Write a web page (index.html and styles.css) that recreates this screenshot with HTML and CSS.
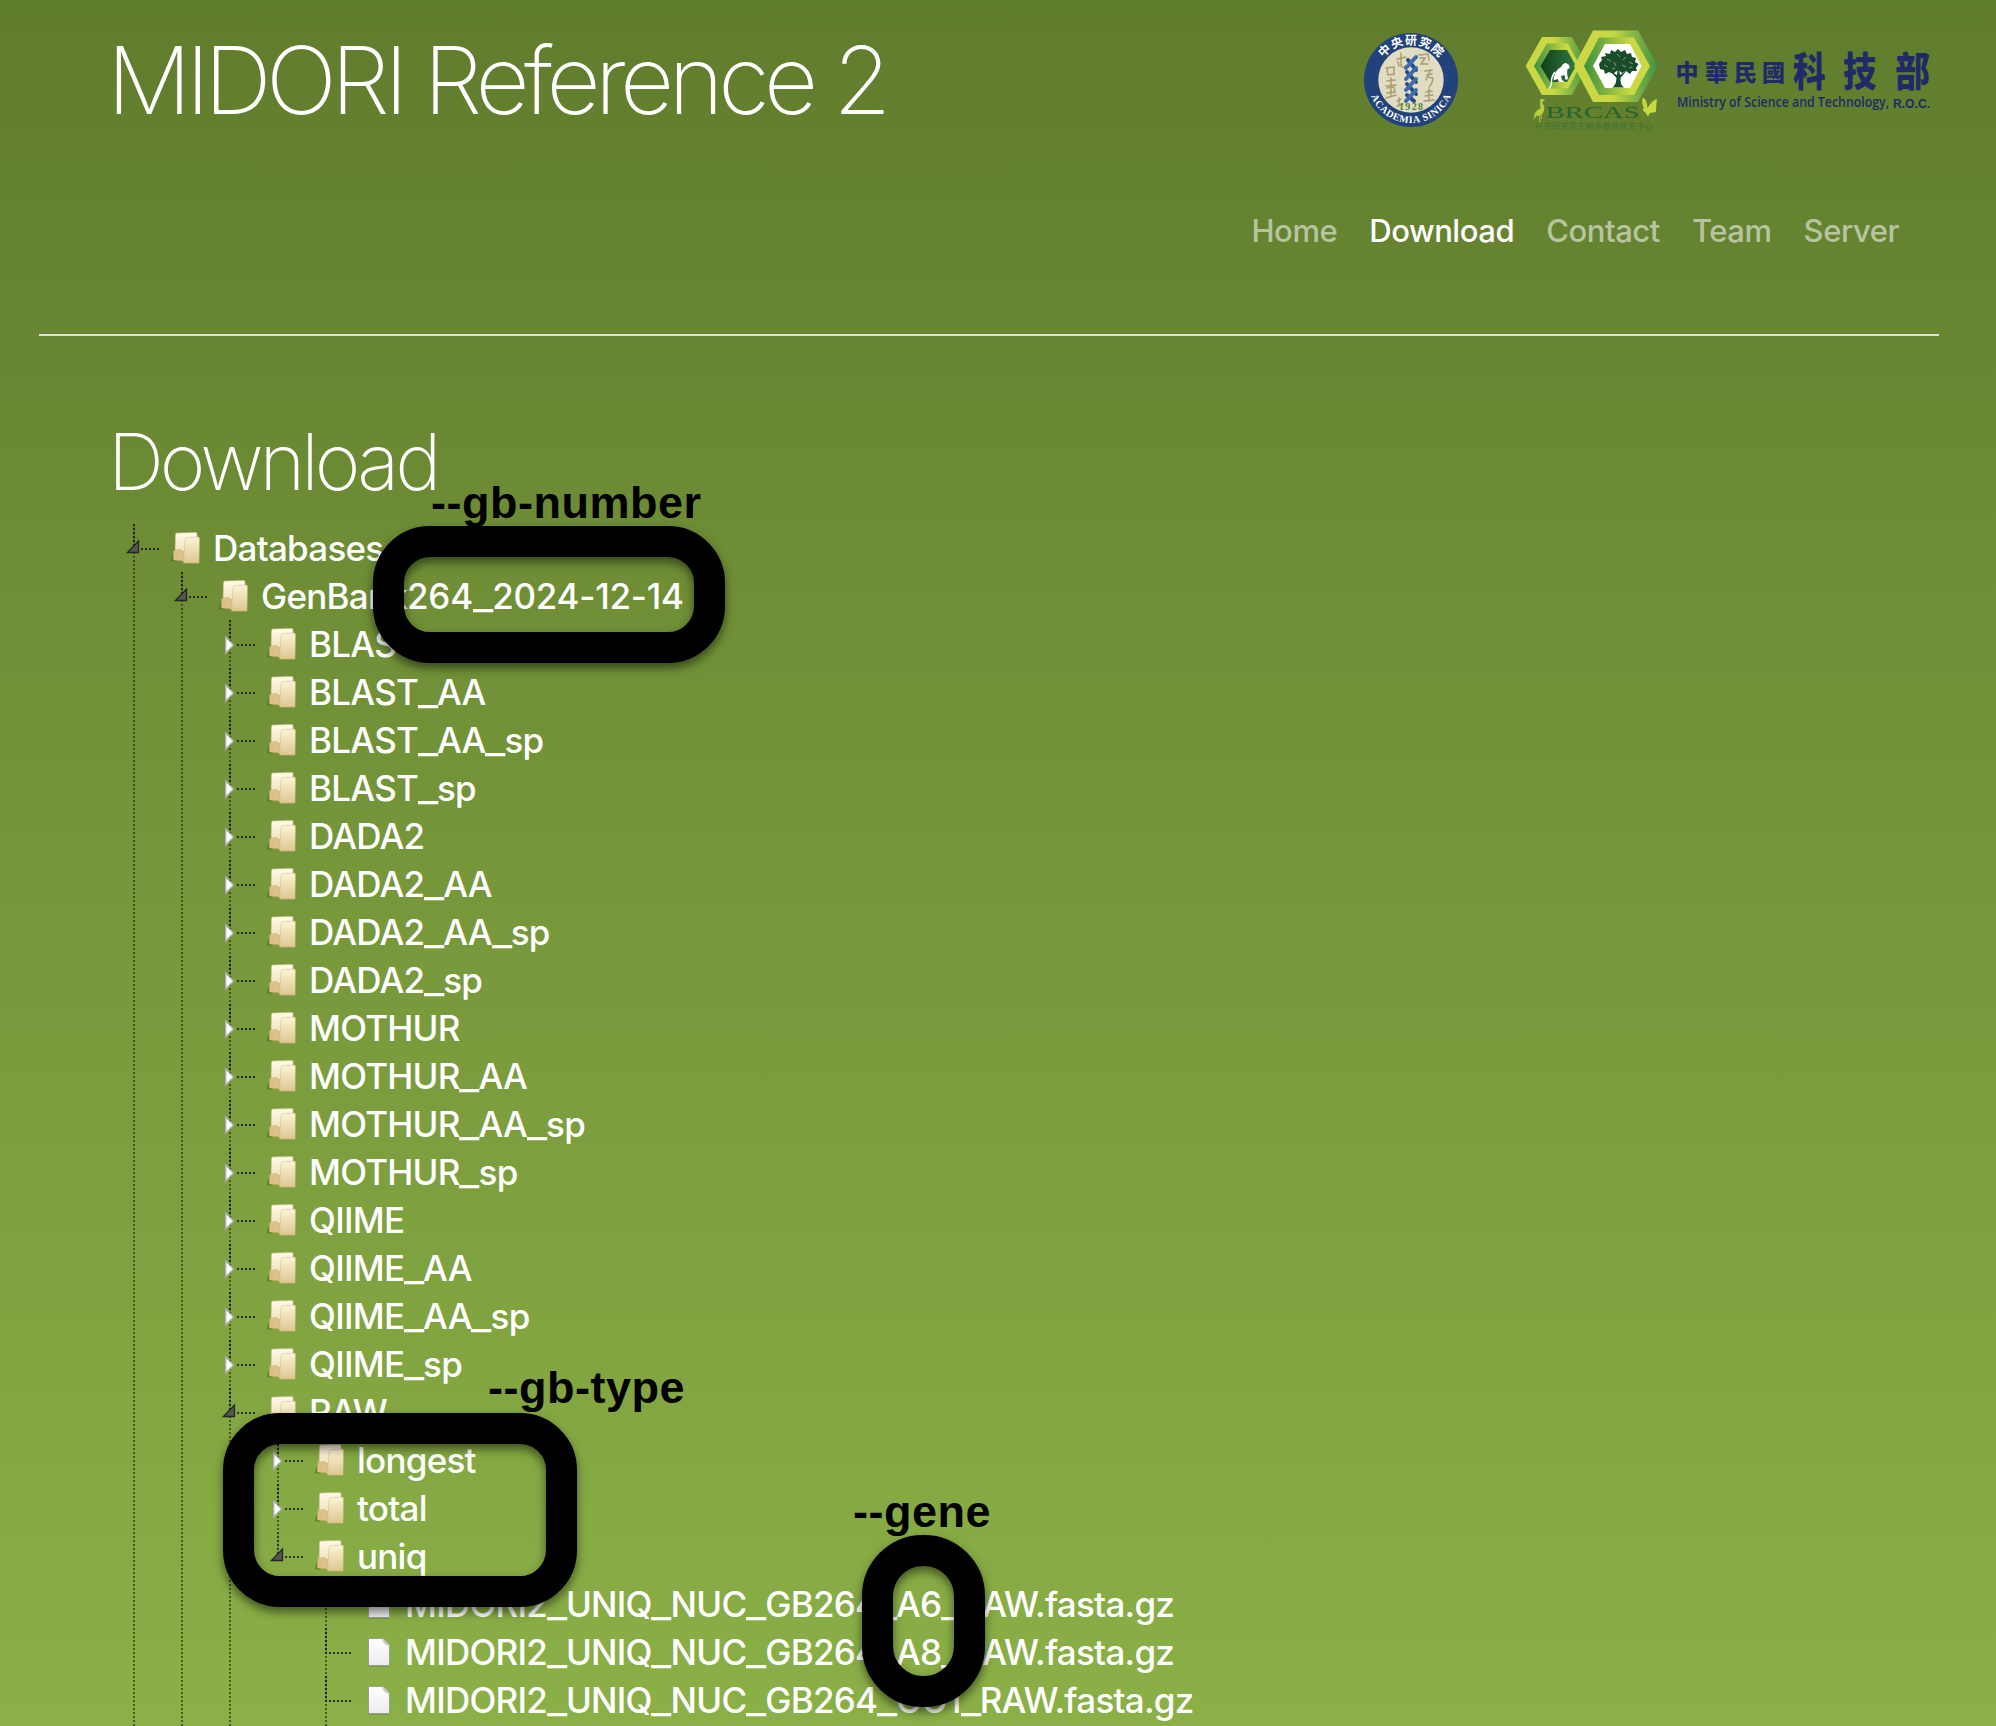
FILE: index.html
```
<!DOCTYPE html>
<html lang="en">
<head>
<meta charset="utf-8">
<title>MIDORI Reference 2</title>
<link rel="stylesheet" href="styles.css">
</head>
<body>
<svg class="defs" width="0" height="0" aria-hidden="true">
  <defs>
    <linearGradient id="fBack" x1="0" y1="0" x2="0" y2="1"><stop offset="0" stop-color="#fffbee"/><stop offset="1" stop-color="#e9d9a8"/></linearGradient>
    <linearGradient id="fFront" x1="0" y1="0" x2="0" y2="1"><stop offset="0" stop-color="#fdf4d8"/><stop offset="1" stop-color="#dcc78c"/></linearGradient>
    <linearGradient id="page" x1="0" y1="0" x2="0" y2="1"><stop offset="0" stop-color="#fff"/><stop offset="1" stop-color="#ececec"/></linearGradient>
  </defs>
  <symbol id="folder" viewBox="0 0 32 32">
    <path d="M0 29L1 24L5 20L5 30Z" fill="#4d5b20" opacity=".5"/>
    <path d="M4.500 2.500Q4.500 1 6 1L25 .6Q26 .6 26 2V27L4 25Z" fill="url(#fBack)" stroke="#d6c595" stroke-width=".6"/>
    <path d="M2.500 19L9 17.500L13 20V29L2.500 28Z" fill="#d9c189" stroke="#c5a96d" stroke-width=".5"/>
    <path d="M12.500 30.500L14 7.500Q14 6 15.500 6L27 5Q28.500 5 28.400 6.500L28 31L13.500 31Z" fill="url(#fFront)" stroke="#d3bd88" stroke-width=".6"/>
  </symbol>
  <symbol id="file" viewBox="0 0 32 32">
    <path d="M5 2.500H20.500L27 9V30.500H5Z" fill="#667140" opacity=".7"/>
    <path d="M5.500 2.500H20L26.500 9V29.500H5.500Z" fill="url(#page)" stroke="#9a9f92" stroke-width="1"/>
    <path d="M19.500 3Q20.500 8.500 26 9.500L26.500 9L20 2.500Z" fill="#ccc" stroke="#bbb" stroke-width=".5"/>
  </symbol>
  <symbol id="open" viewBox="0 0 14 14"><path d="M1.500 12.500L12.500 1V12.500Z" fill="#555" stroke="#262626" stroke-width="1.300"/></symbol>
  <symbol id="closed" viewBox="0 0 12 20"><path d="M1.700 2L9.500 10L1.700 18Z" fill="#fff" stroke="#aeb0b4" stroke-width="1.400"/></symbol>
</svg>

<header class="header">
  <h1 class="title">MIDORI Reference 2</h1>
  <div class="logos">
    <svg class="seal" viewBox="-48 -48 96 96">
      <defs>
        <path id="arcTop" d="M-35.500 0A35.500 35.500 0 0 1 35.500 0"/>
        <path id="arcBottom" d="M-43 0A43 43 0 0 0 43 0"/>
      </defs>
      <circle r="47" fill="#22427c"/><circle r="32.700" fill="#e0ddc3"/>
      <text class="seal-cjk" text-anchor="middle"><textPath href="#arcTop" startOffset="50%" textLength="64">中央研究院</textPath></text>
      <text class="seal-lat" text-anchor="middle"><textPath href="#arcBottom" startOffset="50%" textLength="102">ACADEMIA SINICA</textPath></text>
      <g fill="none" stroke="#aa9c70" stroke-width="1.500" stroke-linecap="round">
        <path d="M-14-21L-5-23M-10-27V-14Q-9-12-5-14M-13-18L-12-14M8-25L17-26L18-20M9-22L14-22L10-16L17-16"/>
        <path d="M-25-12L-17-13V-5M-24-12L-23-5L-17-6M-24 1L-16 0M-25 6L-15 5M-20-2V15M-24 8L-17 7L-16 12L-24 13M-25 18L-15 15"/>
        <path d="M14-9L21-10M16-5L21-6M19-9L15 0M17-3L22-2Q21 5 18 7M15 12L21 11M14 16L22 15M13 21L23 20M18 9V21M-14 21L-10 19M-14 26L-8 24M-12 18V26"/>
      </g>
      <g fill="none" stroke-linecap="round" stroke-width="4">
        <path stroke="#244a86" d="M-3-20L5-10M-4-8L5 2M-4 4L5 14M-4 15L3 21"/>
        <path stroke="#416ba8" d="M5-23L-5-12M5-12L-5-1M5-1L-5 10M5 10L-5 21"/>
      </g>
      <text class="seal-year" x="0" y="30" text-anchor="middle" textLength="24">1928</text>
    </svg>
    <svg class="brcas" viewBox="0 0 144 106">
      <defs>
        <linearGradient id="h1" x1="0" x2="1"><stop offset=".45" stop-color="#c9d844"/><stop offset="1" stop-color="#3f9243"/></linearGradient>
        <linearGradient id="h2" x1="1" x2="0"><stop offset=".3" stop-color="#c9d844"/><stop offset="1" stop-color="#3c913f"/></linearGradient>
        <linearGradient id="h3" x1="0" x2="1"><stop offset="0" stop-color="#123e1c"/><stop offset="1" stop-color="#2f7a40"/></linearGradient>
      </defs>
      <path d="M5.700 40L22 11H52L68 40L52 69H22Z" fill="url(#h1)"/>
      <path d="M14 40L27 17.500H48L60 40L48 62.500H27Z" fill="url(#h2)"/>
      <path d="M20.500 40L30 24H47L56 40L47 56H30Z" fill="url(#h3)"/>
      <path d="M54 40L73 4.500H118L138 40L118 76H73Z" fill="url(#h1)"/>
      <path d="M64 40L79 11.500H114L130 40L114 69H79Z" fill="url(#h2)"/>
      <path d="M73 40L85 18H110L121.500 40L110 62H85Z" fill="#fff"/>
      <path d="M33.500 54.500Q33 51 35 48Q36 44 41 41Q43 37 46 37L49 39L50 42L47.500 43L47 47L48 53L45.500 54L44.500 49L41 50L42 54L45 56H39L37.500 53Z" fill="#fff"/>
      <path d="M35 46Q31 51 31.500 57Q31 61 29 62.500" fill="none" stroke="#fff" stroke-width="1.500"/>
      <g fill="#194d2a">
        <path d="M92 61.500Q96 60 96.500 52L90 45L97 49L98 38L100 49L107 44L100.500 52Q100 59 104 61.500Z"/>
        <path d="M79 38L82 34L81 31L86 30L85 27L90 28L91 24L95 26L98 23L101 26L105 24L107 28L111 27L112 31L116 32L115 36L118.500 38L116 42L117 45L112 45L110 48L106 45L102 47L98 44L93 48L89 46L85 48L84 44L80 43Z"/>
      </g>
      <path d="M87 33L91 35M97 28L100 31M106 31L103 34M109 36L113 38M84 39L88 41M94 36L96 40M102 39L106 41M92 43L95 42M109 42L112 41" fill="none" stroke="#86a98b" stroke-width=".9"/>
      <path d="M20 74Q22 72 25 74L22.500 75.500Q22 78 24 80Q25 86 21 89L16 90L13.500 94L14.500 88Q16 84 20.500 82.500Q20 78 20 74Z" fill="#b8d040"/><path d="M19 89L20 98M21 89L21.500 93" stroke="#b8d040" fill="none" stroke-width=".8"/>
      <path d="M123 71.500Q127 74 127.500 82Q132 74 137 73Q136 80 136 86L130 87L128 90.500L125 86Q121 84 124 82Q121 76 123 71.500Z" fill="#c5d940"/>
      <text class="brcas-name" x="25.500" y="92" textLength="94" lengthAdjust="spacingAndGlyphs">BRCAS</text>
      <text class="brcas-sub" x="15" y="102.500" textLength="118">中央研究院生物多樣性研究中心</text>
    </svg>
    <svg class="most" viewBox="0 0 260 80">
      <g class="most-small"><text x="3.500" y="45.500">中</text><text x="33" y="45.500">華</text><text x="62" y="45.500">民</text><text x="90" y="45.500">國</text></g>
      <g class="most-big"><text transform="translate(121 50.500) scale(.86 1.060)">科</text><text transform="translate(171 50.500) scale(.88 1.060)">技</text><text transform="translate(223 50.500) scale(.92 1.060)">部</text></g>
      <text class="most-en" x="5" y="72" textLength="212" lengthAdjust="spacingAndGlyphs">Ministry of Science and Technology,</text>
      <text class="most-roc" x="221" y="73" textLength="37" lengthAdjust="spacingAndGlyphs">R.O.C.</text>
    </svg>
  </div>
</header>

<nav class="nav">
  <a>Home</a><a class="active">Download</a><a>Contact</a><a>Team</a><a>Server</a>
</nav>
<hr class="rule">

<main class="main">
  <h2 class="heading">Download</h2>
  <ul class="tree">
    <li><div class="row"><svg class="open"><use href="#open"/></svg><svg class="ic"><use href="#folder"/></svg><span>Databases</span></div>
      <ul>
        <li><div class="row"><svg class="open"><use href="#open"/></svg><svg class="ic"><use href="#folder"/></svg><span>GenBank<b>264<i>_</i>2024-12-14</b></span></div>
          <ul>
            <li><div class="row"><svg class="closed"><use href="#closed"/></svg><svg class="ic"><use href="#folder"/></svg><span>BLAST</span></div></li>
            <li><div class="row"><svg class="closed"><use href="#closed"/></svg><svg class="ic"><use href="#folder"/></svg><span>BLAST<i>_</i>AA</span></div></li>
            <li><div class="row"><svg class="closed"><use href="#closed"/></svg><svg class="ic"><use href="#folder"/></svg><span>BLAST<i>_</i>AA<i>_</i>sp</span></div></li>
            <li><div class="row"><svg class="closed"><use href="#closed"/></svg><svg class="ic"><use href="#folder"/></svg><span>BLAST<i>_</i>sp</span></div></li>
            <li><div class="row"><svg class="closed"><use href="#closed"/></svg><svg class="ic"><use href="#folder"/></svg><span>DADA2</span></div></li>
            <li><div class="row"><svg class="closed"><use href="#closed"/></svg><svg class="ic"><use href="#folder"/></svg><span>DADA2<i>_</i>AA</span></div></li>
            <li><div class="row"><svg class="closed"><use href="#closed"/></svg><svg class="ic"><use href="#folder"/></svg><span>DADA2<i>_</i>AA<i>_</i>sp</span></div></li>
            <li><div class="row"><svg class="closed"><use href="#closed"/></svg><svg class="ic"><use href="#folder"/></svg><span>DADA2<i>_</i>sp</span></div></li>
            <li><div class="row"><svg class="closed"><use href="#closed"/></svg><svg class="ic"><use href="#folder"/></svg><span>MOTHUR</span></div></li>
            <li><div class="row"><svg class="closed"><use href="#closed"/></svg><svg class="ic"><use href="#folder"/></svg><span>MOTHUR<i>_</i>AA</span></div></li>
            <li><div class="row"><svg class="closed"><use href="#closed"/></svg><svg class="ic"><use href="#folder"/></svg><span>MOTHUR<i>_</i>AA<i>_</i>sp</span></div></li>
            <li><div class="row"><svg class="closed"><use href="#closed"/></svg><svg class="ic"><use href="#folder"/></svg><span>MOTHUR<i>_</i>sp</span></div></li>
            <li><div class="row"><svg class="closed"><use href="#closed"/></svg><svg class="ic"><use href="#folder"/></svg><span>QIIME</span></div></li>
            <li><div class="row"><svg class="closed"><use href="#closed"/></svg><svg class="ic"><use href="#folder"/></svg><span>QIIME<i>_</i>AA</span></div></li>
            <li><div class="row"><svg class="closed"><use href="#closed"/></svg><svg class="ic"><use href="#folder"/></svg><span>QIIME<i>_</i>AA<i>_</i>sp</span></div></li>
            <li><div class="row"><svg class="closed"><use href="#closed"/></svg><svg class="ic"><use href="#folder"/></svg><span>QIIME<i>_</i>sp</span></div></li>
            <li><div class="row"><svg class="open"><use href="#open"/></svg><svg class="ic"><use href="#folder"/></svg><span>RAW</span></div>
              <ul>
                <li><div class="row"><svg class="closed"><use href="#closed"/></svg><svg class="ic"><use href="#folder"/></svg><span>longest</span></div></li>
                <li><div class="row"><svg class="closed"><use href="#closed"/></svg><svg class="ic"><use href="#folder"/></svg><span>total</span></div></li>
                <li class="last"><div class="row"><svg class="open"><use href="#open"/></svg><svg class="ic"><use href="#folder"/></svg><span>uniq</span></div>
                  <ul class="files">
                    <li><div class="row"><svg class="ic"><use href="#file"/></svg><span>MIDORI2<i>_</i>UNIQ<i>_</i>NUC<i>_</i>GB264<i>_</i>A6<i>_</i>RAW.fasta.gz</span></div></li>
                    <li><div class="row"><svg class="ic"><use href="#file"/></svg><span>MIDORI2<i>_</i>UNIQ<i>_</i>NUC<i>_</i>GB264<i>_</i>A8<i>_</i>RAW.fasta.gz</span></div></li>
                    <li><div class="row"><svg class="ic"><use href="#file"/></svg><span>MIDORI2<i>_</i>UNIQ<i>_</i>NUC<i>_</i>GB264<i>_</i>CO1<i>_</i>RAW.fasta.gz</span></div></li>
                  </ul>
                </li>
              </ul>
            </li>
          </ul>
        </li>
      </ul>
    </li>
  </ul>
</main>

<div class="ring ring-number"></div><div class="label label-number">--gb-number</div>
<div class="ring ring-type"></div><div class="label label-type">--gb-type</div>
<div class="ring ring-gene"></div><div class="label label-gene">--gene</div>
</body>
</html>
```

FILE: styles.css
```
* { box-sizing: border-box; }
body {
  margin: 0;
  position: relative;
  height: 1726px;
  overflow: hidden;
  background: linear-gradient(#607c2d, #8bb047);
  color: #fff;
  font-family: Inter, "Liberation Sans", sans-serif;
}
.defs { display: block; height: 0; }

.header {
  display: flex;
  justify-content: space-between;
  height: 196px;
  padding: 0 64px 0 107px;
}
.title {
  margin: 0;
  padding-top: 23px;
  font-size: 94px;
  line-height: 114px;
  font-weight: 230;
  letter-spacing: -5.6px;
  white-space: nowrap;
}
.logos { display: flex; align-items: flex-start; }
.logos svg { display: block; flex: none; }
.seal { width: 96px; height: 96px; margin: 32px 61px 0 0; }
.brcas { width: 144px; height: 106px; margin-top: 26px; }
.most { width: 260px; height: 80px; margin: 35px 0 0 8px; }
.seal-cjk { font: 700 12px "Noto Sans CJK TC", sans-serif; fill: #fff; }
.seal-lat { font: 700 10px "Liberation Serif", serif; fill: #fff; }
.seal-year { font: 700 10px "Liberation Serif", serif; fill: #4d8430; }
.brcas-name { font: 16.5px "Liberation Serif", serif; fill: #28642b; }
.brcas-sub { font: 8px "Noto Sans CJK TC", sans-serif; fill: #3d7033; }
.most-small { font: 900 23px "Noto Sans CJK TC", sans-serif; fill: #212a68; }
.most-big { font: 900 38px "Noto Sans CJK TC", sans-serif; fill: #212a68; }
.most-en { font: 600 14px "Open Sans", sans-serif; fill: #212a68; }
.most-roc { font: 700 12.5px "Liberation Sans", sans-serif; fill: #212a68; }

.nav {
  display: flex;
  justify-content: flex-end;
  gap: 32px;
  height: 138px;
  padding: 16px 97px 0 0;
  font-size: 31px;
  font-weight: 450;
  line-height: 38px;
  letter-spacing: -.45px;
  color: rgba(255, 255, 255, .55);
}
.nav .active { color: #fff; }
.rule {
  height: 2px;
  margin: 0 57px 0 39px;
  border: 0;
  background: #dfe2dc;
}

.main { padding-left: 108px; }
.heading {
  margin: 0;
  padding-top: 79px;
  height: 188px;
  font-size: 78px;
  line-height: 94px;
  font-weight: 230;
  letter-spacing: -4px;
}
.tree, .tree ul { margin: 0; padding: 0; list-style: none; }
.tree { padding-left: 25px; }
.tree ul { padding-left: 48px; }
.tree li {
  background:
    repeating-linear-gradient(rgba(20, 20, 20, .75) 0 2px, rgba(20, 20, 20, .15) 2px 4px) 0 0 / 2px 24px no-repeat,
    repeating-linear-gradient(rgba(30, 30, 30, .6) 0 2px, transparent 2px 4px) 0 0 / 2px 100% no-repeat;
}
.tree li.last {
  background: repeating-linear-gradient(rgba(20, 20, 20, .75) 0 2px, rgba(20, 20, 20, .1) 2px 4px) 0 0 / 2px 24px no-repeat;
}
.files li:last-child { padding-bottom: 2px; }
.row {
  display: flex;
  align-items: center;
  height: 48px;
  font-size: 35px;
  font-weight: 450;
  letter-spacing: -.75px;
  white-space: nowrap;
  background: repeating-linear-gradient(90deg, rgba(20, 20, 20, .8) 0 2px, transparent 2px 4px) 8px 24px / 19px 2px no-repeat;
}
.files .row { background-position: 0 24px; background-size: 26px 2px; }
.row svg { flex: none; }
.row .open { width: 14px; height: 14px; margin: -3px 31px 0 -7px; }
.row .closed { width: 12px; height: 20px; margin: 2px 31px 0 -5px; }
.ic { width: 32px; height: 32px; }
.files .ic { margin-left: 38px; }
.row span { margin-left: 10px; }
.row b { font-weight: inherit; letter-spacing: -.25px; }
.row i {
  display: inline-block;
  margin: 0 1.7px;
  font-style: normal;
  transform: scaleX(1.25);
}

.ring {
  position: absolute;
  border: 31px solid #000;
  border-radius: 57px;
  filter: drop-shadow(0 5px 5px rgba(0, 0, 0, .5));
}
.ring-number { left: 373px; top: 526px; width: 352px; height: 137px; }
.ring-type { left: 223px; top: 1413px; width: 354px; height: 194px; }
.ring-gene { left: 862px; top: 1535px; width: 123px; height: 172px; border-radius: 61px; }
.label {
  position: absolute;
  color: #000;
  font: 700 45px/52px "Liberation Sans", sans-serif;
  letter-spacing: .5px;
  white-space: nowrap;
}
.label-number { left: 431px; top: 477px; }
.label-type { left: 488px; top: 1362px; }
.label-gene { left: 853px; top: 1486px; }
```
